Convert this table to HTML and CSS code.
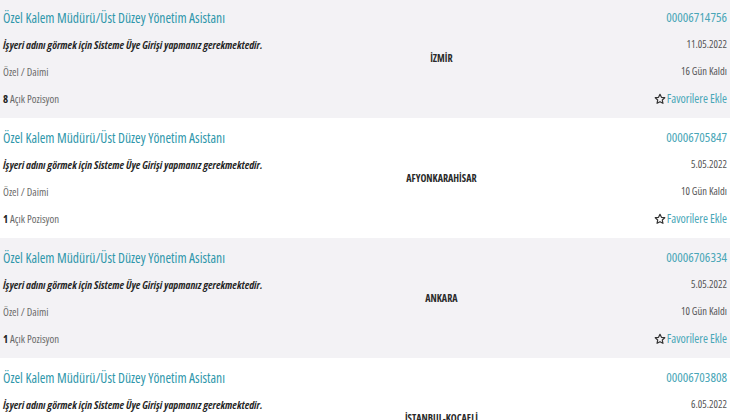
FILE: index.html
```html
<!DOCTYPE html>
<html lang="tr">
<head>
<meta charset="utf-8">
<link rel="stylesheet" href="styles.css">
</head>
<body>
<div class="list">
  <div class="row gray">
    <div class="left">
      <a class="line title">Özel Kalem Müdürü/Üst Düzey Yönetim Asistanı</a>
      <div class="line warn">İşyeri adını görmek için Sisteme Üye Girişi yapmanız gerekmektedir.</div>
      <div class="line meta">Özel / Daimi</div>
      <div class="line meta"><b>8</b> Açık Pozisyon</div>
    </div>
    <div class="city">İZMİR</div>
    <div class="right">
      <a class="line code">00006714756</a>
      <div class="line date">11.05.2022</div>
      <div class="line date">16 Gün Kaldı</div>
      <a class="line fav"><svg class="star" viewBox="0 0 24 24"><path d="M12 2.5l2.9 6.1 6.6.8-4.9 4.6 1.3 6.6L12 17.3l-5.9 3.3 1.3-6.6-4.9-4.6 6.6-.8z"/></svg>Favorilere Ekle</a>
    </div>
  </div>
  <div class="row">
    <div class="left">
      <a class="line title">Özel Kalem Müdürü/Üst Düzey Yönetim Asistanı</a>
      <div class="line warn">İşyeri adını görmek için Sisteme Üye Girişi yapmanız gerekmektedir.</div>
      <div class="line meta">Özel / Daimi</div>
      <div class="line meta"><b>1</b> Açık Pozisyon</div>
    </div>
    <div class="city">AFYONKARAHİSAR</div>
    <div class="right">
      <a class="line code">00006705847</a>
      <div class="line date">5.05.2022</div>
      <div class="line date">10 Gün Kaldı</div>
      <a class="line fav"><svg class="star" viewBox="0 0 24 24"><path d="M12 2.5l2.9 6.1 6.6.8-4.9 4.6 1.3 6.6L12 17.3l-5.9 3.3 1.3-6.6-4.9-4.6 6.6-.8z"/></svg>Favorilere Ekle</a>
    </div>
  </div>
  <div class="row gray">
    <div class="left">
      <a class="line title">Özel Kalem Müdürü/Üst Düzey Yönetim Asistanı</a>
      <div class="line warn">İşyeri adını görmek için Sisteme Üye Girişi yapmanız gerekmektedir.</div>
      <div class="line meta">Özel / Daimi</div>
      <div class="line meta"><b>1</b> Açık Pozisyon</div>
    </div>
    <div class="city">ANKARA</div>
    <div class="right">
      <a class="line code">00006706334</a>
      <div class="line date">5.05.2022</div>
      <div class="line date">10 Gün Kaldı</div>
      <a class="line fav"><svg class="star" viewBox="0 0 24 24"><path d="M12 2.5l2.9 6.1 6.6.8-4.9 4.6 1.3 6.6L12 17.3l-5.9 3.3 1.3-6.6-4.9-4.6 6.6-.8z"/></svg>Favorilere Ekle</a>
    </div>
  </div>
  <div class="row">
    <div class="left">
      <a class="line title">Özel Kalem Müdürü/Üst Düzey Yönetim Asistanı</a>
      <div class="line warn">İşyeri adını görmek için Sisteme Üye Girişi yapmanız gerekmektedir.</div>
      <div class="line meta">Özel / Daimi</div>
      <div class="line meta"><b>1</b> Açık Pozisyon</div>
    </div>
    <div class="city">İSTANBUL-KOCAELİ</div>
    <div class="right">
      <a class="line code">00006703808</a>
      <div class="line date">6.05.2022</div>
      <div class="line date">10 Gün Kaldı</div>
      <a class="line fav"><svg class="star" viewBox="0 0 24 24"><path d="M12 2.5l2.9 6.1 6.6.8-4.9 4.6 1.3 6.6L12 17.3l-5.9 3.3 1.3-6.6-4.9-4.6 6.6-.8z"/></svg>Favorilere Ekle</a>
    </div>
  </div>
</div>
</body>
</html>
```

FILE: styles.css
```css
html, body {
  margin: 0;
  padding: 0;
  background: #ffffff;
}
body {
  font-family: "Open Sans", "DejaVu Sans Condensed", "Liberation Sans", sans-serif;
  font-stretch: 75%;
  color: #555;
  overflow: hidden;
}
.list {
  margin-top: -2px;
}
.row {
  display: grid;
  grid-template-columns: 50% 20% 30%;
  height: 120px;
  box-sizing: border-box;
  padding: 6px 3px 6px 3px;
  background: #ffffff;
}
.row.gray {
  background: #f3f2f5;
}
.left, .right {
  display: flex;
  flex-direction: column;
}
.right {
  align-items: flex-end;
}
.line {
  height: 27px;
  line-height: 27px;
  white-space: nowrap;
  display: block;
}
.title {
  font-size: 13.6px;
  color: #2f97ab;
}
.warn {
  font-size: 10.8px;
  font-weight: 700;
  font-style: italic;
  color: #262626;
}
.meta {
  font-size: 10.8px;
  color: #6a6a6a;
}
.meta b {
  color: #222;
  font-weight: 700;
}
.city {
  align-self: center;
  text-align: center;
  font-size: 10px;
  font-weight: 700;
  color: #2a2a2a;
  padding-left: 8px;
}
.code {
  font-size: 13px;
  color: #48a6b7;
}
.date {
  font-size: 10.5px;
  color: #555;
}
.fav {
  font-size: 12px;
  color: #48a6b7;
  display: flex;
  align-items: center;
  gap: 1px;
}
.star {
  width: 12px;
  height: 12px;
  fill: none;
  stroke: #333;
  stroke-width: 2.4;
  stroke-linejoin: round;
}
```
